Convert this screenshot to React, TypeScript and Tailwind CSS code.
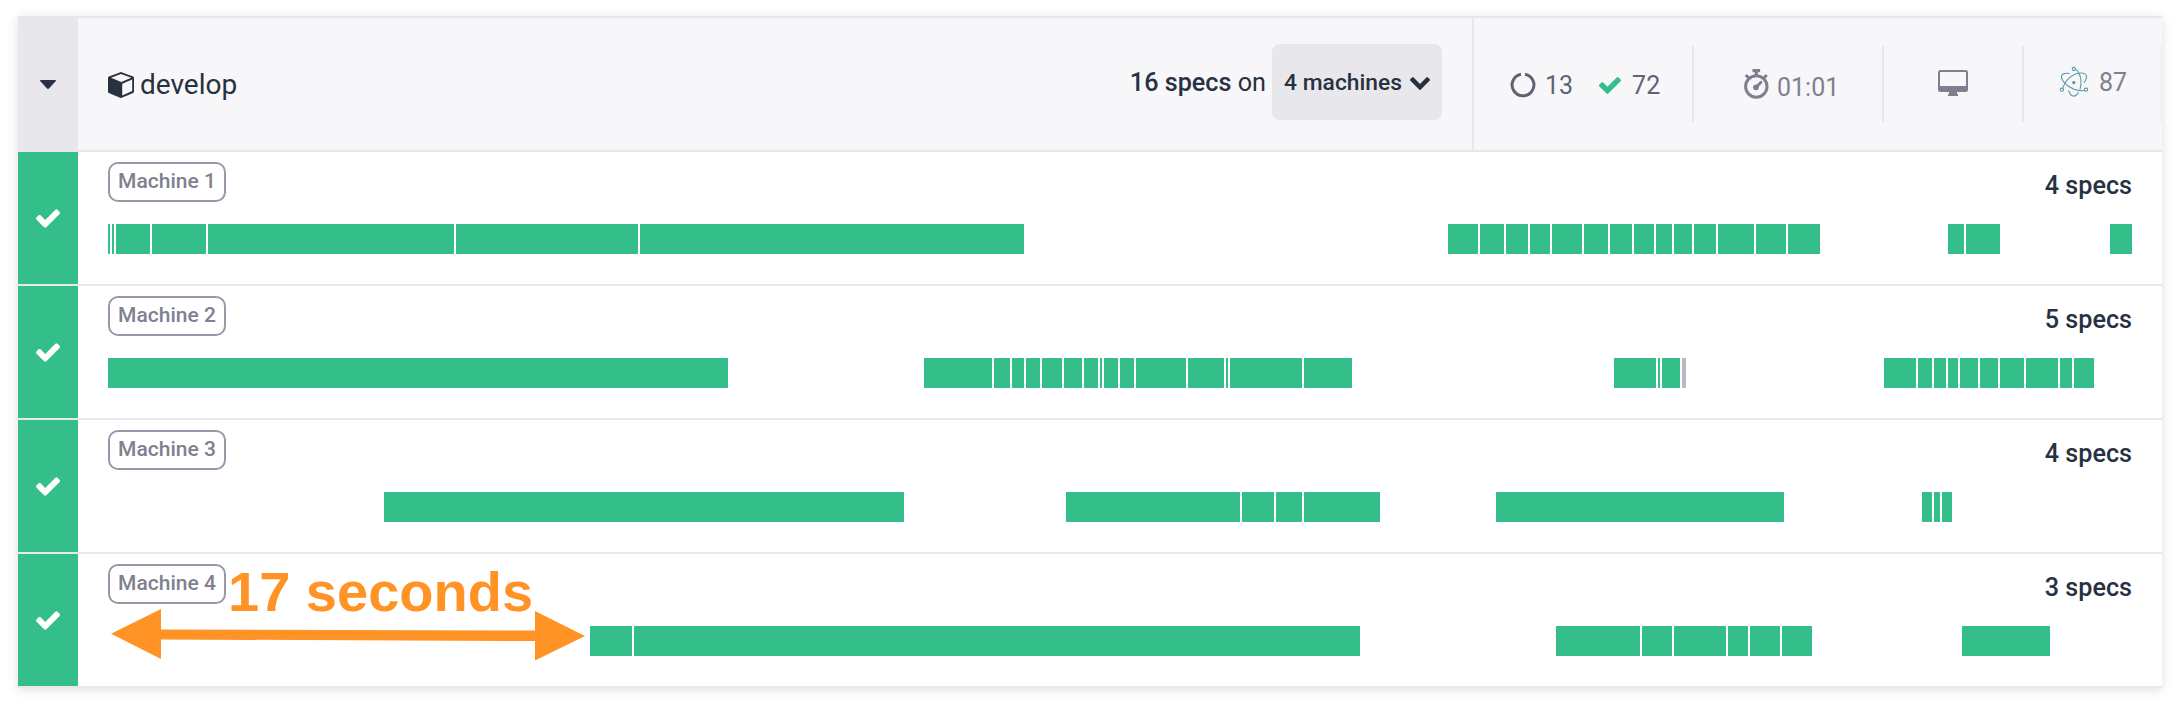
import React from "react";

type Seg = [start: number, end: number, muted?: boolean];

const TRACK_START = 108;

const machines: { name: string; specs: string; segs: Seg[] }[] = [
  {
    name: "Machine 1",
    specs: "4 specs",
    segs: [
      [108, 110], [112, 114], [116, 150], [152, 206], [208, 454], [456, 638], [640, 1024],
      [1448, 1478], [1480, 1504], [1506, 1528], [1530, 1550], [1552, 1582], [1584, 1608],
      [1610, 1632], [1634, 1654], [1656, 1672], [1674, 1692], [1694, 1716], [1718, 1754],
      [1756, 1786], [1788, 1820], [1948, 1964], [1966, 2000], [2110, 2132],
    ],
  },
  {
    name: "Machine 2",
    specs: "5 specs",
    segs: [
      [108, 728], [924, 992], [994, 1010], [1012, 1024], [1026, 1040], [1042, 1062],
      [1064, 1082], [1084, 1098], [1100, 1102], [1104, 1118], [1120, 1134], [1136, 1186],
      [1188, 1224], [1226, 1228], [1230, 1302], [1304, 1352], [1614, 1656], [1658, 1660],
      [1662, 1680], [1682, 1686, true], [1884, 1916], [1918, 1932], [1934, 1946],
      [1948, 1958], [1960, 1978], [1980, 1998], [2000, 2024], [2026, 2058], [2060, 2072],
      [2074, 2094],
    ],
  },
  {
    name: "Machine 3",
    specs: "4 specs",
    segs: [
      [384, 904], [1066, 1240], [1242, 1274], [1276, 1302], [1304, 1380], [1496, 1784],
      [1922, 1932], [1934, 1940], [1942, 1952],
    ],
  },
  {
    name: "Machine 4",
    specs: "3 specs",
    segs: [
      [590, 632], [634, 1360], [1556, 1640], [1642, 1672], [1674, 1726], [1728, 1748],
      [1750, 1780], [1782, 1812], [1962, 2050],
    ],
  },
];

function Timeline({ segs }: { segs: Seg[] }) {
  return (
    <div className="flex h-[30px]">
      {segs.map(([start, end, muted], i) => (
        <div
          key={start}
          className={muted ? "h-full shrink-0 bg-[#b9b9c4]" : "h-full shrink-0 bg-[#34be89]"}
          style={{ marginLeft: start - (i ? segs[i - 1][1] : TRACK_START), width: end - start }}
        />
      ))}
    </div>
  );
}

function Check({ className }: { className: string }) {
  return (
    <svg className={className} viewBox="121 334 1550 1188" fill="currentColor">
      <path d="M1671 566q0 40-28 68l-724 724-136 136q-28 28-68 28t-68-28l-136-136-362-362q-28-28-28-68t28-68l136-136q28-28 68-28t68 28l294 295 656-657q28-28 68-28t68 28l136 136q28 28 28 68z" />
    </svg>
  );
}

function ChevronDown() {
  return (
    <svg className="mt-[2px] ml-2 h-[13px] w-5" viewBox="90 533 1612 1035" fill="currentColor">
      <path d="M1683 808l-742 741q-19 19-45 19t-45-19l-742-741q-19-19-19-45.500t19-45.500l166-165q19-19 45-19t45 19l531 531 531-531q19-19 45-19t45 19l166 165q19 19 19 45.500t-19 45.500z" />
    </svg>
  );
}

function Cube() {
  return (
    <svg className="mt-0.5 size-[26px]" viewBox="0 0 26 26" fill="#27313f">
      <path
        fillRule="evenodd"
        d="M12.400.2q.6-.3 1.200 0l11.500 4.300q.9.400.9 1.300v13.800q0 .9-.8 1.300l-11.500 4.900q-.8.400-1.600 0L.8 20.900q-.8-.4-.8-1.300V5.800q0-.9.900-1.300zM13 2L3 5.800l10.300 4.200L23.300 5.800zM14.200 11.700v11.800l10-4.500V7.500z"
      />
    </svg>
  );
}

function Electron() {
  return (
    <svg className="h-8 w-7" viewBox="0 0 28 32" fill="none" stroke="#5c9aa8" strokeWidth="1.100">
      <path d="M9.800 7.500C5.800 6.900 2.700 7.500 1.800 9.300c-1.300 2.700 1.200 7 6 10.400 4.500 3.200 10 5 14 5.100l2.500-.2" />
      <path d="M2.900 21.900C4.300 16.500 9 10.600 15.500 8c1.500-.6 3-1 4.500-1 3.500-.2 5.700.8 6.300 2.500.7 1.900-.2 4.600-2.400 7.300" />
      <path d="M15.300 3.200c3.400 1.300 5.500 7.300 5.700 12.300.1 2.800-.2 5.300-1 7.800M8.500 24.500c1.200 3.500 3 5.600 5.200 5.600 1.800 0 3.500-1.400 4.800-4.100" />
      <circle cx="13.800" cy="3" r="1.600" />
      <circle cx="2" cy="23.700" r="1.600" />
      <circle cx="26" cy="23.700" r="1.600" />
      <circle cx="13.800" cy="16.700" r="1.100" fill="#3f8596" />
    </svg>
  );
}

function Stopwatch() {
  return (
    <svg className="h-8 w-[26px]" viewBox="0 0 26 32" fill="none" stroke="#7f7f8e">
      <circle cx="13.300" cy="18.500" r="10.700" strokeWidth="3" />
      <path d="M13.300 3v4M9.500 2.700h7.600" strokeWidth="3.200" />
      <path d="M2.800 7l3 3M23.800 7l-3 3" strokeWidth="3" />
      <path d="M13.300 19l4.700-4.700" strokeWidth="2.800" strokeLinecap="round" />
      <circle cx="13" cy="19.300" r="2.900" fill="#7f7f8e" stroke="none" />
    </svg>
  );
}

export default function App() {
  return (
    <div className="h-[702px] w-[2180px] bg-white px-[18px] pt-4 font-['Roboto',sans-serif] text-[#27313f]">
      <div className="border-y-2 border-[#e7e7ec] bg-white shadow-[0_2px_10px_rgba(0,0,0,0.13)]">
        <header className="flex h-[134px] border-b-2 border-[#e7e7ec] bg-[#f7f7fa]">
          <div className="flex w-[60px] items-center justify-center bg-[#e7e7ec]">
            <svg className="h-[9px] w-4" viewBox="0 0 16 9" fill="#27313f">
              <path d="M.7 0h14.600q1 .3.300 1.300L9 8.500q-1 .8-2 0L.4 1.300Q-.3.300.7 0z" />
            </svg>
          </div>
          <div className="flex flex-1 items-center pl-[30px]">
            <Cube />
            <span className="mt-px ml-[6px] text-[28px]">develop</span>
          </div>
          <div className="flex items-center pr-[30px] pb-1">
            <span className="mt-0.5 text-[25.200px]"><b className="font-medium">16 specs</b> on</span>
            <div className="ml-[6px] flex h-[76px] w-[170px] items-center justify-center rounded-lg bg-[#e7e7ec] text-[22.800px] font-medium">
              <span className="mt-0.5">4 machines</span>
              <ChevronDown />
            </div>
          </div>
          <div className="flex w-[690px] items-center border-l-2 border-[#e7e7ec] text-[25px] text-[#7f7f8e]">
            <div className="flex h-[76px] w-[220px] items-center border-r-2 border-[#e7e7ec] pl-9 text-[#5f6373]">
              <svg className="mt-0.5 size-[26px]" viewBox="0 0 26 26" fill="none" stroke="currentColor" strokeWidth="3">
                <path d="M11 2.200a10.900 10.900 0 1 0 4 0" />
              </svg>
              <span className="mt-1 ml-[9px]">13</span>
              <Check className="mt-0.5 ml-[26px] h-[17px] w-[22px] text-[#34be89]" />
              <span className="mt-1 ml-[11px]">72</span>
            </div>
            <div className="flex h-[76px] w-[190px] items-center border-r-2 border-[#e7e7ec] pl-[49px]">
              <Stopwatch />
              <span className="mt-2 ml-2">01:01</span>
            </div>
            <div className="flex h-[76px] w-[140px] items-center justify-center border-r-2 border-[#e7e7ec] pb-0.5">
              <svg className="h-[26px] w-[30px]" viewBox="0 0 30 26" fill="#7f7f8e" fillRule="evenodd">
                <path d="M2.500 0h25A2.500 2.500 0 0 1 30 2.500v17a2.500 2.500 0 0 1-2.500 2.500H19v1.500l1 1V26H10v-1.500l1-1V22H2.500A2.500 2.500 0 0 1 0 19.500v-17A2.500 2.500 0 0 1 2.500 0zM3 2a1 1 0 0 0-1 1v13h26V3a1 1 0 0 0-1-1z" />
              </svg>
            </div>
            <div className="flex h-[76px] w-[138px] items-center border-r-2 border-[#efeff3] pb-1 pl-9">
              <Electron />
              <span className="mt-px ml-[11px]">87</span>
            </div>
          </div>
        </header>
        {machines.map((m, i) => (
          <section
            key={m.name}
            className="flex h-[134px] border-b-2 border-[#e7e7ec] last:h-[132px] last:border-b-0"
          >
            <div className="flex w-[60px] items-center justify-center bg-[#34be89]">
              <Check className="mt-px h-[19px] w-6 text-white" />
            </div>
            <div className="relative flex-1 px-[30px] pt-[10px]">
              <div className="flex h-[62px] items-start justify-between">
                <span className="flex h-10 w-[118px] justify-center rounded-[10px] border-2 border-[#9a98a8] text-[21px] leading-[35px] font-medium text-[#7f8190]">
                  {m.name}
                </span>
                <span className="mt-2 text-[25.200px] leading-[32px] font-medium">{m.specs}</span>
              </div>
              <Timeline segs={m.segs} />
              {i === 3 && (
                <div className="absolute top-0 left-[30px]">
                  <div className="ml-[120px] pt-[6px] font-['Liberation_Sans',sans-serif] text-[56px] leading-[64px] font-bold text-[#ff9326]">
                    17 seconds
                  </div>
                  <svg className="absolute top-[54px] left-0 h-[54px] w-[480px]" viewBox="0 0 480 54" fill="#ff9326">
                    <path d="M3 25.700L53 1v20.500l374 1V3l50 25-50 24.500V33L53 31.500V51z" />
                  </svg>
                </div>
              )}
            </div>
          </section>
        ))}
      </div>
    </div>
  );
}
